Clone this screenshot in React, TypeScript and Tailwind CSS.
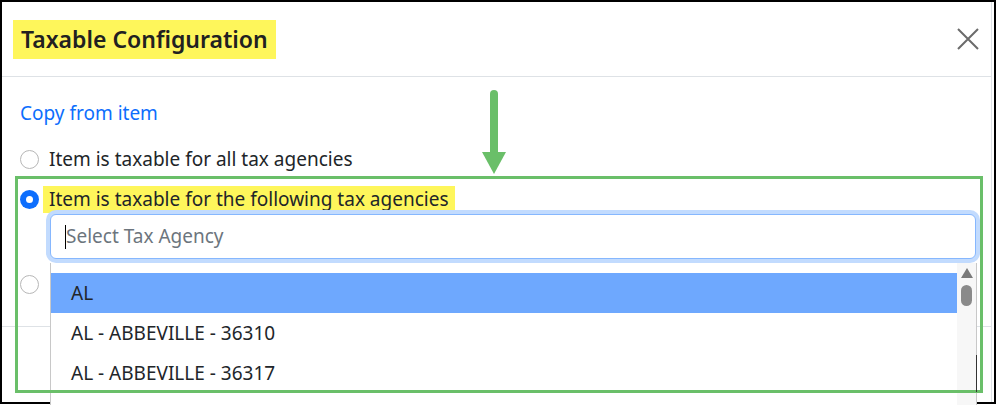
import React from "react"

const font = { fontFamily: '"Noto Sans", "Open Sans", Arial, sans-serif' }

function Radio({ checked }: { checked?: boolean }) {
    if (checked) {
        return (
            <span className="flex h-[19px] w-[19px] shrink-0 items-center justify-center rounded-full bg-[#0d6efd]">
                <span className="h-[7px] w-[7px] rounded-full bg-white" />
            </span>
        )
    }
    return <span className="h-[19px] w-[19px] shrink-0 rounded-full border border-[#b7b7b7] bg-white" />
}

export default function App() {
    const agencies = ["AL", "AL - ABBEVILLE - 36310", "AL - ABBEVILLE - 36317"]

    return (
        <div className="relative h-[405px] w-[997px] overflow-hidden bg-white" style={font}>
            <div className="h-[404px] w-[996px] border-2 border-black">
                <div className="h-full w-[990px] border-r border-[#dee2e6] text-[#212529]">
                    {/* header */}
                    <div className="flex h-[75px] items-center justify-between border-b border-[#dee2e6] pl-[11px] pr-[12px]">
                        <h1 className="flex h-[39px] items-center bg-[#fef65b] px-[8px] text-[23px] font-semibold leading-none text-[#212121]">
                            Taxable Configuration
                        </h1>
                        <svg width="22" height="22" viewBox="0 0 22 22" className="text-[#6b6b6b]">
                            <path d="M1 1 L21 21 M21 1 L1 21" stroke="currentColor" strokeWidth="2" />
                        </svg>
                    </div>

                    {/* body */}
                    <div className="h-[250px] border-b border-[#dee2e6] pl-[18px] pr-[15px] pt-[23px] text-[19px]">
                        <a className="block leading-[26px] text-[#0d6efd]">Copy from item</a>
                        <div className="mt-[19px] flex h-[28px] items-center gap-[10px]">
                            <Radio />
                            <span>Item is taxable for all tax agencies</span>
                        </div>
                        <div className="mt-[12px] flex h-[28px] items-center gap-[4px]">
                            <Radio checked />
                            <span className="flex h-[27px] items-center bg-[#fef65b] px-[6px]">
                                Item is taxable for the following tax agencies
                            </span>
                        </div>
                        <div className="relative ml-[30px] mt-[1px]">
                            <div className="flex h-[45px] items-center rounded-[6px] border border-[#86b7fe] bg-white pl-[14px] shadow-[0_0_0_4px_#c2dbfe]">
                                <span className="h-[24px] w-px bg-black" />
                                <span className="text-[#6c757d]">Select Tax Agency</span>
                            </div>

                            {/* dropdown */}
                            <div className="absolute left-0 top-[49px] z-10 flex h-[160px] w-[927px] border-x border-[#c8c8c8] bg-white pt-[10px]">
                                <div className="flex-1">
                                    {agencies.map((a, i) => (
                                        <div
                                            key={a}
                                            className={
                                                i === 0
                                                    ? "flex h-[40px] items-center bg-[#6ea8fe] pl-[20px]"
                                                    : "flex h-[40px] items-center pl-[20px]"
                                            }
                                        >
                                            {a}
                                        </div>
                                    ))}
                                </div>
                                <div className="-mt-[10px] flex w-[19px] flex-col items-center bg-[#f7f7f7] pt-[5px]">
                                    <svg width="12" height="10" viewBox="0 0 12 10">
                                        <path d="M6 0 L12 10 L0 10 Z" fill="#7a7a7a" />
                                    </svg>
                                    <span className="mt-[7px] h-[21px] w-[11px] rounded-full bg-[#8a8a8a]" />
                                </div>
                            </div>
                        </div>
                        <div className="mt-[11px] flex h-[28px] items-center gap-[10px]">
                            <Radio />
                        </div>
                    </div>
                </div>
            </div>

            {/* annotation: green box + arrow */}
            <div className="pointer-events-none absolute left-[15px] top-[176px] z-20 h-[217px] w-[968px] border-[3px] border-[#6abf69]" />
            <div className="pointer-events-none absolute left-[976px] top-[355px] z-20 h-[37px] w-px bg-[#333]" />
            <svg className="pointer-events-none absolute left-[480px] top-[90px] z-20" width="28" height="86" viewBox="0 0 28 86">
                <path d="M14 4 L14 64" stroke="#6abf69" strokeWidth="8" strokeLinecap="round" />
                <path d="M2 62 L26 62 L14 84 Z" fill="#6abf69" />
            </svg>
        </div>
    )
}
